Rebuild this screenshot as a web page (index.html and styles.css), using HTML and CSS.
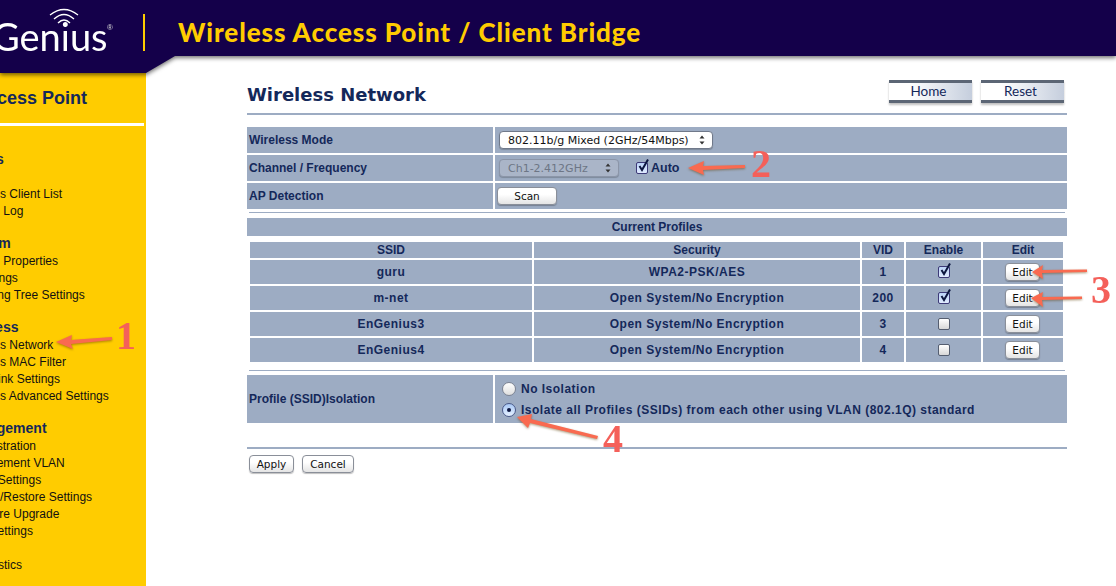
FILE: index.html
```html
<!DOCTYPE html>
<html lang="en">
<head>
<meta charset="utf-8">
<title>Wireless Network</title>
<link rel="stylesheet" href="styles.css">
</head>
<body>
<div class="page">
  <div class="header-wrap">
    <header class="header">
      <div class="logo">
        <svg class="wifi" width="32" height="22" viewBox="0 0 32 22" fill="none" stroke="#fff">
          <path d="M2 8 Q16 -3 30 8" stroke-width="1.3"/>
          <path d="M6 12 Q16 3 26 12" stroke-width="1.3"/>
          <path d="M10 16 Q16 10 22 16" stroke-width="1.4"/>
        </svg>
        <span class="logo-text">Genius</span><span class="logo-reg">®</span>
      </div>
      <div class="divider"></div>
      <div class="product">Wireless Access Point / Client Bridge</div>
    </header>
  </div>
  <div class="body-row">
    <nav class="sidebar">
      <div class="side-title">Access Point</div>
      <div class="side-rule"></div>
      <div class="group">
        <div class="group-head">Status</div>
        <div class="item">Main</div>
        <div class="item">Wireless Client List</div>
        <div class="item">System Log</div>
      </div>
      <div class="group">
        <div class="group-head">System</div>
        <div class="item">System Properties</div>
        <div class="item">IP Settings</div>
        <div class="item">Spanning Tree Settings</div>
      </div>
      <div class="group">
        <div class="group-head">Wireless</div>
        <div class="item">Wireless Network</div>
        <div class="item">Wireless MAC Filter</div>
        <div class="item">WDS Link Settings</div>
        <div class="item">Wireless Advanced Settings</div>
      </div>
      <div class="group">
        <div class="group-head">Management</div>
        <div class="item">Administration</div>
        <div class="item">Management VLAN</div>
        <div class="item">SNMP Settings</div>
        <div class="item">Backup/Restore Settings</div>
        <div class="item">Firmware Upgrade</div>
        <div class="item">Time Settings</div>
        <div class="item">Log</div>
        <div class="item">Diagnostics</div>
      </div>
    </nav>
    <main class="main">
      <div class="title-row">
        <h1 class="title">Wireless Network</h1>
        <div class="top-buttons">
          <a class="top-btn">Home</a>
          <a class="top-btn">Reset</a>
        </div>
      </div>
      <div class="rule-thick"></div>
      <div class="form-grid">
        <div class="cell label">Wireless Mode</div>
        <div class="cell value"><select class="sel sel-mode"><option>802.11b/g Mixed (2GHz/54Mbps)</option></select></div>
        <div class="cell label">Channel / Frequency</div>
        <div class="cell value">
          <select class="sel sel-channel" disabled><option>Ch1-2.412GHz</option></select>
          <span class="auto">
            <span class="box box-on"><svg class="tick" width="15" height="16" viewBox="0 0 15 16"><path d="M3.5 8 L6 12 L12 1.5" fill="none" stroke="#0d1740" stroke-width="2"/></svg></span>
            <span class="auto-text">Auto</span>
          </span>
        </div>
        <div class="cell label">AP Detection</div>
        <div class="cell value"><button class="btn btn-scan" type="button">Scan</button></div>
      </div>
      <div class="rule-thin rule-a"></div>
      <div class="profiles-head">Current Profiles</div>
      <div class="profiles">
        <div class="ph">SSID</div><div class="ph">Security</div><div class="ph">VID</div><div class="ph">Enable</div><div class="ph">Edit</div>

        <div class="pc">guru</div><div class="pc">WPA2-PSK/AES</div><div class="pc">1</div>
        <div class="pc"><span class="box box-on"><svg class="tick" width="15" height="16" viewBox="0 0 15 16"><path d="M3.5 8 L6 12 L12 1.5" fill="none" stroke="#0d1740" stroke-width="2"/></svg></span></div>
        <div class="pc"><button class="btn btn-edit" type="button">Edit</button></div>

        <div class="pc">m-net</div><div class="pc">Open System/No Encryption</div><div class="pc">200</div>
        <div class="pc"><span class="box box-on"><svg class="tick" width="15" height="16" viewBox="0 0 15 16"><path d="M3.5 8 L6 12 L12 1.5" fill="none" stroke="#0d1740" stroke-width="2"/></svg></span></div>
        <div class="pc"><button class="btn btn-edit" type="button">Edit</button></div>

        <div class="pc">EnGenius3</div><div class="pc">Open System/No Encryption</div><div class="pc">3</div>
        <div class="pc"><span class="box"></span></div>
        <div class="pc"><button class="btn btn-edit" type="button">Edit</button></div>

        <div class="pc">EnGenius4</div><div class="pc">Open System/No Encryption</div><div class="pc">4</div>
        <div class="pc"><span class="box"></span></div>
        <div class="pc"><button class="btn btn-edit" type="button">Edit</button></div>
      </div>
      <div class="rule-thin rule-b"></div>
      <div class="iso-grid">
        <div class="cell label">Profile (SSID)Isolation</div>
        <div class="cell iso-options">
          <div class="iso-opt"><span class="radio"></span><span>No Isolation</span></div>
          <div class="iso-opt"><span class="radio radio-on"></span><span>Isolate all Profiles (SSIDs) from each other using VLAN (802.1Q) standard</span></div>
        </div>
      </div>
      <div class="rule-thick rule-c"></div>
      <div class="actions">
        <button class="btn btn-apply" type="button">Apply</button>
        <button class="btn btn-cancel" type="button">Cancel</button>
      </div>
    </main>
  </div>

  <svg class="arrows" width="1116" height="586" viewBox="0 0 1116 586">
    <g class="arrow">
      <path d="M56 342 L72 335 L71 340 L112 337 L112 340 L71 344 L73 349 Z"/>
      <path d="M688 168 L704 161 L703 166 L745 165 L745 168 L703 170 L704 175 Z"/>
      <path d="M1032 272 L1043 265 L1042 270 L1087 269.5 L1087 272 L1042 273 L1043 279 Z"/>
      <path d="M1031 298 L1043 292 L1042 297 L1082 296.5 L1082 299 L1042 300 L1043 307 Z"/>
      <path d="M517 417 L532 414 L531 419 L598 436 L597 439 L530 423 L528 428 Z"/>
    </g>
  </svg>
  <span class="num num1">1</span>
  <span class="num num2">2</span>
  <span class="num num3">3</span>
  <span class="num num4">4</span>
</div>
</body>
</html>
```

FILE: styles.css
```css
* { box-sizing: border-box; }
html, body { margin: 0; padding: 0; background: #fff; }
.page { position: relative; width: 1116px; height: 586px; overflow: hidden; font-family: "Liberation Sans", Arial, sans-serif; color: #14285a; }

/* header */
.header-wrap { position: relative; z-index: 2; height: 73px; filter: drop-shadow(0 2px 2px rgba(0,0,0,.55)); }
.header { display: flex; align-items: flex-start; height: 73px; background: #14004a; clip-path: polygon(0 0, 100% 0, 100% 56px, 175px 56px, 146px 73px, 0 73px); }
.logo { position: relative; width: 143px; height: 56px; flex: none; }
.wifi { position: absolute; left: 48px; top: 7px; }
.logo-text { position: absolute; left: -8px; top: 13px; font-family: Lato, sans-serif; font-weight: 400; font-size: 38px; line-height: 46px; color: #fff; }
.logo-reg { position: absolute; left: 107px; top: 23px; font-size: 8px; line-height: 10px; color: #ddd; }
.divider { flex: none; width: 2px; height: 37px; margin-top: 14px; background: #ffcc00; }
.product { margin: 17px 0 0 33px; font-family: Lato, sans-serif; font-weight: 900; font-size: 26px; line-height: 30px; letter-spacing: .91px; color: #ffcc00; white-space: nowrap; }

.body-row { display: flex; height: 513px; }

/* sidebar */
.sidebar { flex: none; width: 146px; height: 513px; background: #ffcc00; overflow: hidden; }
.side-title { margin-left: -26px; height: 50px; font-weight: 700; font-size: 18px; line-height: 50px; white-space: nowrap; color: #14285a; }
.side-rule { width: 144px; height: 3px; background: #fff; margin-bottom: 25px; }
.group { margin-bottom: 15px; margin-left: -39px; white-space: nowrap; }
.group-head { height: 18px; font-weight: 700; font-size: 14px; line-height: 17px; color: #14285a; }
.item { height: 17px; margin-left: -1px; font-size: 12px; line-height: 17px; color: #111; }

/* main */
.main { flex: none; width: 820px; margin-left: 101px; }
.title-row { display: flex; justify-content: space-between; height: 40px; padding-top: 7px; }
.title { margin: 0; padding-top: 4px; font-family: "DejaVu Sans", Verdana, sans-serif; font-weight: 700; font-size: 18px; line-height: 22px; color: #14285a; }
.top-buttons { display: flex; gap: 9px; margin-right: 3px; }
.top-btn { display: flex; align-items: center; justify-content: center; width: 83px; height: 23px; padding: 0 4px 2px 0; border-top: 3px solid #5c6675; border-bottom: 3px solid #5c6675; background: linear-gradient(90deg, #fff 25%, #c5cedd 100%); box-shadow: 0 2px 2px rgba(0,0,0,.25); font-family: Lato, sans-serif; font-size: 13.5px; color: #14285a; }
.rule-thick { height: 2px; background: #9dacc3; }

.form-grid { display: grid; grid-template-columns: 246px 572px; grid-auto-rows: 26px; gap: 2px; margin-top: 12px; }
.cell { display: flex; align-items: center; background: #9dacc3; }
.label { padding-left: 2px; font-weight: 700; font-size: 12px; color: #14285a; }
.value { padding-left: 4px; }

.sel { appearance: none; -webkit-appearance: none; height: 18px; padding: 0 0 0 8px; border: 1px solid #70798a; border-radius: 4px; background: #fff url("data:image/svg+xml,%3Csvg xmlns='http://www.w3.org/2000/svg' width='8' height='10'%3E%3Cpath d='M4 0.5L6.5 3.5H1.5ZM4 9.5L1.5 6.5H6.5Z' fill='%23333'/%3E%3C/svg%3E") no-repeat right 6px center; font-family: "DejaVu Sans", sans-serif; font-size: 11px; color: #111; box-shadow: 0 1px 1px rgba(0,0,0,.2); opacity: 1; }
.sel-mode { width: 214px; }
.sel-channel { width: 120px; background-color: #aab5c8; color: #6d7585; border-color: #8b95a8; }
.auto { display: flex; align-items: center; margin-left: 17px; }
.auto-text { margin-left: 3px; font-weight: 700; font-size: 12.5px; color: #14285a; }

.box { position: relative; display: inline-block; width: 12px; height: 12px; border: 1px solid #555e70; border-radius: 2px; background: linear-gradient(#fff, #d8d8d8); }
.box-on { background: linear-gradient(#bcd4f8, #dfeaff); border-color: #3d3a78; }
.tick { position: absolute; left: -1px; top: -5px; }

.btn { padding: 0; height: 18px; border: 1px solid #8a8f99; border-radius: 4px; background: linear-gradient(#fff 40%, #e4e4e4); font-family: "DejaVu Sans", sans-serif; font-size: 10.5px; color: #111; box-shadow: 0 1px 1px rgba(0,0,0,.25); }
.btn-scan { width: 60px; margin-left: -2px; }
.btn-edit { width: 35px; margin-right: 1px; }
.btn-apply { width: 45px; }
.btn-cancel { width: 52px; }

.rule-thin { height: 1px; background: #9dacc3; margin: 0 2px; }
.rule-a { margin-top: 3px; }
.profiles-head { height: 18px; margin-top: 5px; background: #9dacc3; font-weight: 700; font-size: 12px; line-height: 18px; text-align: center; }
.profiles { display: grid; grid-template-columns: 282px 326px 42px 75px 80px; grid-template-rows: 16px repeat(4, 24px); gap: 2px; margin: 6px 0 0 3px; }
.ph, .pc { display: flex; align-items: center; justify-content: center; background: #9dacc3; font-weight: 700; font-size: 12px; color: #14285a; }
.pc { letter-spacing: .5px; }

.rule-b { margin-top: 8px; }
.iso-grid { display: grid; grid-template-columns: 246px 572px; gap: 2px; margin-top: 4px; height: 48px; }
.iso-options { flex-direction: column; align-items: flex-start; justify-content: flex-start; padding: 3px 0 0 7px; }
.iso-opt { display: flex; align-items: center; gap: 5px; height: 21px; font-weight: 700; font-size: 12px; letter-spacing: .49px; color: #14285a; }
.radio { position: relative; flex: none; width: 14px; height: 14px; border: 1px solid #7d8493; border-radius: 50%; background: linear-gradient(#fff, #dedede); }
.radio-on { background: linear-gradient(#a9c8f5, #e5f0ff); border-color: #4a5a8a; }
.radio-on::after { content: ""; position: absolute; left: 4px; top: 4px; width: 4px; height: 4px; border-radius: 50%; background: #0d1740; }
.rule-c { margin-top: 24px; }
.actions { display: flex; gap: 8px; margin: 6px 0 0 2px; }

/* annotations */
.arrows { position: absolute; left: 0; top: 0; z-index: 3; pointer-events: none; }
.arrow { fill: #f96a50; filter: drop-shadow(0 1px 1px rgba(90,60,0,.5)); }
.num { position: absolute; z-index: 4; font-family: "Liberation Serif", serif; font-weight: 700; font-size: 40px; line-height: 40px; color: #f4605a; }
.num1 { left: 116px; top: 316px; }
.num2 { left: 751px; top: 144px; }
.num3 { left: 1091px; top: 270px; }
.num4 { left: 603px; top: 419px; }
```
